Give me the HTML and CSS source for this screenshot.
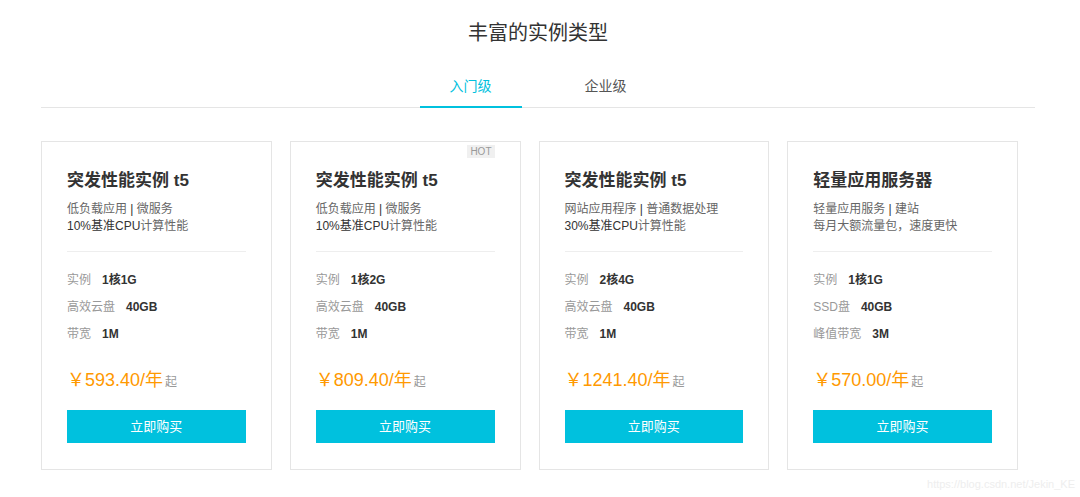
FILE: index.html
```html
<!DOCTYPE html>
<html lang="zh-CN">
<head>
<meta charset="utf-8">
<title>丰富的实例类型</title>
<link rel="stylesheet" href="styles.css">
</head>
<body>
<div class="page">
  <h1 class="heading">丰富的实例类型</h1>
  <div class="tabs">
    <div class="tab active">入门级</div>
    <div class="tab">企业级</div>
  </div>
  <div class="cards">
    <div class="card">
      <div class="card-title">突发性能实例 t5</div>
      <div class="desc">
        <div>低负载应用 <span class="sep">|</span> 微服务</div>
        <div><span class="em">10%基准CPU</span>计算性能</div>
      </div>
      <div class="specs">
        <div class="spec"><span class="label">实例</span><span class="value">1核1G</span></div>
        <div class="spec"><span class="label">高效云盘</span><span class="value">40GB</span></div>
        <div class="spec"><span class="label">带宽</span><span class="value">1M</span></div>
      </div>
      <div class="price"><span class="amount">￥593.40/年</span><span class="from">起</span></div>
      <div class="buy">立即购买</div>
    </div>
    <div class="card">
      <span class="hot">HOT</span>
      <div class="card-title">突发性能实例 t5</div>
      <div class="desc">
        <div>低负载应用 <span class="sep">|</span> 微服务</div>
        <div><span class="em">10%基准CPU</span>计算性能</div>
      </div>
      <div class="specs">
        <div class="spec"><span class="label">实例</span><span class="value">1核2G</span></div>
        <div class="spec"><span class="label">高效云盘</span><span class="value">40GB</span></div>
        <div class="spec"><span class="label">带宽</span><span class="value">1M</span></div>
      </div>
      <div class="price"><span class="amount">￥809.40/年</span><span class="from">起</span></div>
      <div class="buy">立即购买</div>
    </div>
    <div class="card">
      <div class="card-title">突发性能实例 t5</div>
      <div class="desc">
        <div>网站应用程序 <span class="sep">|</span> 普通数据处理</div>
        <div><span class="em">30%基准CPU</span>计算性能</div>
      </div>
      <div class="specs">
        <div class="spec"><span class="label">实例</span><span class="value">2核4G</span></div>
        <div class="spec"><span class="label">高效云盘</span><span class="value">40GB</span></div>
        <div class="spec"><span class="label">带宽</span><span class="value">1M</span></div>
      </div>
      <div class="price"><span class="amount">￥1241.40/年</span><span class="from">起</span></div>
      <div class="buy">立即购买</div>
    </div>
    <div class="card">
      <div class="card-title">轻量应用服务器</div>
      <div class="desc">
        <div>轻量应用服务 <span class="sep">|</span> 建站</div>
        <div>每月大额流量包，速度更快</div>
      </div>
      <div class="specs">
        <div class="spec"><span class="label">实例</span><span class="value">1核1G</span></div>
        <div class="spec"><span class="label">SSD盘</span><span class="value">40GB</span></div>
        <div class="spec"><span class="label">峰值带宽</span><span class="value">3M</span></div>
      </div>
      <div class="price"><span class="amount">￥570.00/年</span><span class="from">起</span></div>
      <div class="buy">立即购买</div>
    </div>
  </div>
</div>
<div class="watermark">https://blog.csdn.net/Jekin_KE</div>
</body>
</html>
```
FILE: styles.css
```css
* { box-sizing: border-box; }
html, body {
  margin: 0;
  padding: 0;
  background: #fff;
}
body {
  font-family: "Liberation Sans", "Noto Sans CJK SC", sans-serif;
  color: #333;
  width: 1080px;
  height: 497px;
  overflow: hidden;
  position: relative;
}
.page {
  width: 994px;
  margin-left: 41px;
  padding-top: 19px;
}
.heading {
  margin: 0;
  font-size: 20px;
  line-height: 28px;
  font-weight: normal;
  text-align: center;
  color: #333;
}
.tabs {
  margin-top: 29px;
  display: flex;
  justify-content: center;
  gap: 33px;
  border-bottom: 1px solid #e5e5e5;
}
.tab {
  width: 102px;
  text-align: center;
  font-size: 14px;
  line-height: 20px;
  padding-bottom: 10px;
  color: #555;
  border-bottom: 2px solid transparent;
  margin-bottom: -1px;
}
.tab.active {
  color: #00c1de;
  border-bottom-color: #00c1de;
}
.cards {
  margin-top: 33px;
  width: 977px;
  display: grid;
  grid-template-columns: repeat(4, 1fr);
  gap: 18px;
}
.card {
  position: relative;
  border: 1px solid #e5e5e5;
  padding: 27px 25px 26px;
}
.hot {
  position: absolute;
  top: 3px;
  right: 25px;
  background: #f0f0f0;
  color: #999;
  font-size: 10px;
  line-height: 13px;
  padding: 0 3px;
}
.card-title {
  font-size: 17px;
  line-height: 24px;
  font-weight: bold;
  color: #333;
}
.desc {
  margin-top: 8px;
  font-size: 12px;
  line-height: 17px;
  color: #666;
  padding-bottom: 16px;
  border-bottom: 1px solid #eee;
}
.desc .sep, .desc .em { color: #333; }
.specs {
  margin-top: 15px;
}
.spec {
  font-size: 12px;
  line-height: 27px;
  display: flex;
  gap: 11px;
}
.label { color: #999; }
.value { color: #333; font-weight: bold; }
.price {
  margin-top: 20px;
  line-height: 24px;
  display: flex;
  align-items: baseline;
  gap: 2px;
}
.amount {
  font-size: 18px;
  color: #ff9900;
}
.from {
  font-size: 12px;
  color: #999;
}
.buy {
  margin-top: 16px;
  height: 33px;
  line-height: 33px;
  background: #00c1de;
  color: #fff;
  text-align: center;
  font-size: 13px;
}
.watermark {
  position: absolute;
  right: 5px;
  top: 477px;
  font-size: 11px;
  line-height: 14px;
  color: #eee;
}
```
